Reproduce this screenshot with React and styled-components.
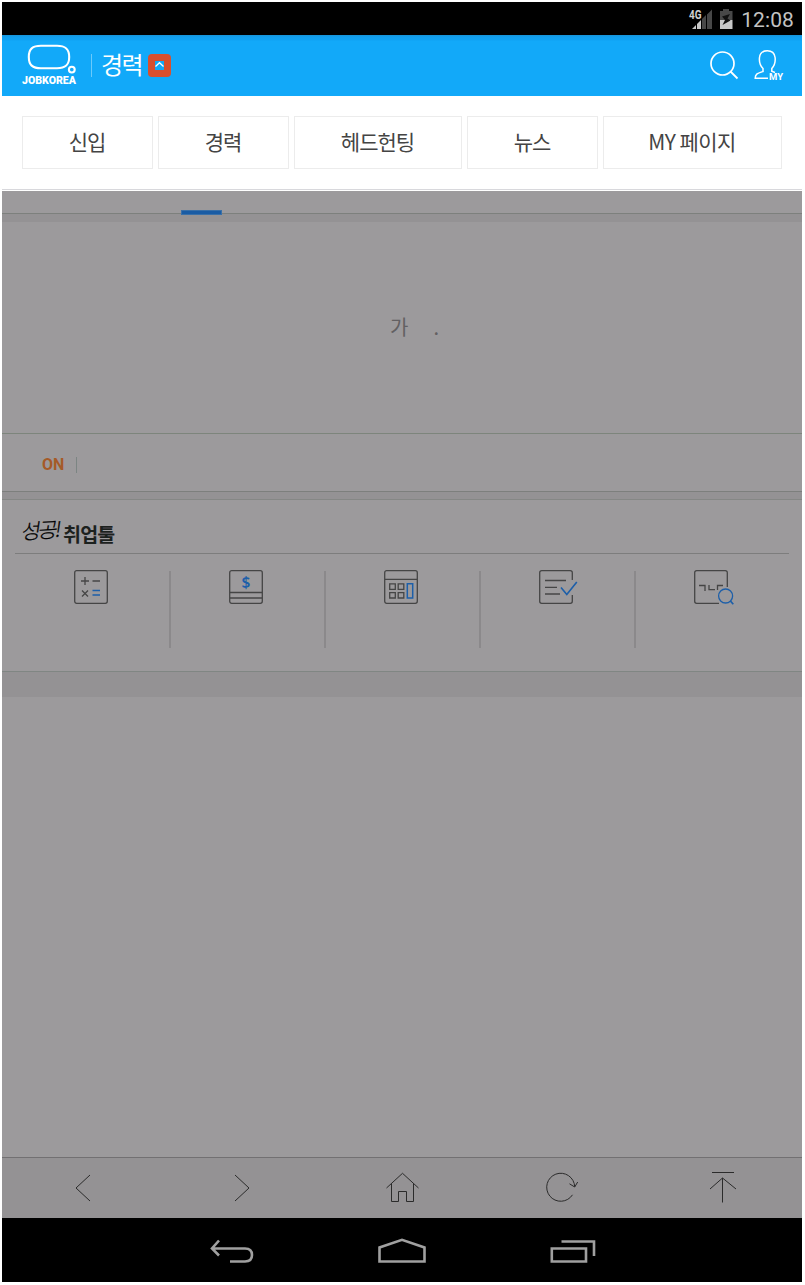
import React from "react";
import styled, { createGlobalStyle } from "styled-components";

const Global = createGlobalStyle`
  *{box-sizing:border-box}
  body{margin:0;background:#fff;font-family:"Noto Sans CJK KR","Roboto",sans-serif}
  svg{display:block;overflow:visible;flex:none}
`;

const Device = styled.div`
  width: 800px;
  height: 1280px;
  margin: 2px;
  display: flex;
  flex-direction: column;
  background: #9c9a9c;
  overflow: hidden;
`;
const StatusBar = styled.div`
  height: 33px;
  flex: none;
  background: #000;
  display: flex;
  justify-content: flex-end;
  align-items: center;
  padding: 1px 8px 0 0;
`;
const Clock = styled.span`
  font: 400 21px/30px Roboto, sans-serif;
  color: #c3c3c3;
  letter-spacing: 0.1px;
  margin-left: 7px;
  padding-top: 1px;
`;
const Header = styled.header`
  height: 61px;
  flex: none;
  background: linear-gradient(#1793d8 0, #129fee 2px, #10a2f3 5px, #12a9f9 6px);
  display: flex;
  align-items: center;
  padding: 0 18px 0 20px;
`;
const LogoLink = styled.a`
  margin: -4px 13px 0 0;
`;
const Divider = styled.i`
  width: 1px;
  height: ${(p) => p.$h}px;
  background: ${(p) => p.$color};
`;
const Section = styled.span`
  color: #fff;
  font-size: 24px;
  font-weight: 400;
  line-height: 30px;
  letter-spacing: -1.5px;
  margin: -4px 5px 0 9px;
  width: 42px;
  white-space: nowrap;
`;
const HeaderIcons = styled.div`
  margin: -2px 0 0 auto;
  display: flex;
  gap: 16px;
`;
const Menu = styled.nav`
  height: 95px;
  flex: none;
  background: #fff;
  padding: 20px;
  display: grid;
  grid-template-columns: 131px 131px 168px 131px 179px;
  grid-template-rows: 53px;
  gap: 5px;
  box-shadow: inset 0 -1px #fff, inset 0 -2px #d8d8dc;
`;
const MenuItem = styled.button`
  border: 1px solid #ececec;
  background: #fff;
  padding: 0 1px 4px 0;
  color: #444;
  font: 400 21px/30px "Noto Sans CJK KR", sans-serif;
  letter-spacing: ${(p) => p.$spacing || "-1px"};
`;
const TabStrip = styled.div`
  height: 22px;
  flex: none;
  display: flex;
  align-items: flex-end;
  padding-left: 179px;
`;
const TabMark = styled.i`
  width: 41px;
  height: 5px;
  margin-bottom: -2px;
  background: #1a5ca4;
  border: 1px solid #3a70a8;
  z-index: 1;
`;
const Band = styled.div`
  height: ${(p) => p.$h}px;
  flex: none;
  background: #949294;
  border-top: ${(p) => p.$top || "1px solid #808683"};
  border-bottom: ${(p) => p.$bottom || "0"};
`;
const Notice = styled.div`
  height: 211px;
  flex: none;
  display: flex;
  justify-content: center;
  padding-top: 90px;
  padding-left: 25px;
  color: #626062;
  font-size: 20px;
  line-height: 30px;
  font-weight: 400;
  gap: 25px;
`;
const OnRow = styled.div`
  height: 58px;
  flex: none;
  border-top: 1px solid #7d857c;
  display: flex;
  align-items: center;
  gap: 12px;
  padding: 5px 0 0 40px;
  color: #a55a28;
  font: 700 16px/20px Roboto, sans-serif;
`;
const Tools = styled.section`
  height: 171px;
  flex: none;
  padding: 0 13px;
`;
const ToolsTitle = styled.h2`
  height: 54px;
  margin: 0;
  padding: 13px 0 0 7px;
  border-bottom: 1px solid #7d7d7d;
  display: flex;
  align-items: center;
  color: #1c211e;
  font-size: 19.5px;
  font-weight: 700;
  letter-spacing: -0.8px;
  white-space: nowrap;
`;
const Script = styled.span`
  font-size: 21px;
  font-weight: 300;
  color: #000;
  width: 41px;
  letter-spacing: -2.6px;
  -webkit-text-stroke: 0.25px #000;
  transform: translateY(-4px) skew(-8deg, -4deg);
`;
const ToolGrid = styled.div`
  display: grid;
  grid-template-columns: repeat(5, 155px);
  padding-top: 17px;
  margin-left: 1px;
`;
const Tool = styled.div`
  height: 77px;
  display: flex;
  justify-content: center;
  border-right: ${(p) => (p.$last ? "0" : "2px solid #8b898b")};

  svg {
    margin: -1px 0 0 ${(p) => (p.$last ? "-5px" : "-3px")};
  }
`;
const Blank = styled.div`
  flex: 1;
`;
const Toolbar = styled.div`
  height: 61px;
  flex: none;
  background: #949294;
  border-top: 1px solid #727072;
  display: grid;
  grid-template-columns: repeat(5, 1fr);
  place-items: center;
`;
const SystemBar = styled.div`
  height: 64px;
  flex: none;
  background: #000;
  display: flex;
  justify-content: center;
  gap: 124px;
  padding-top: 19px;
`;

const ink = { fill: "none", stroke: "#454545", strokeWidth: 1.3 };
const blue = { fill: "none", stroke: "#1d5fa9", strokeWidth: 1.3 };
const thin = { fill: "none", stroke: "#2b2b2b", strokeWidth: 1 };
const sys = { fill: "none", stroke: "#a0a0a0", strokeWidth: 2.6 };

const Logo = () => (
  <svg width="56" height="42" viewBox="0 0 56 42">
    <path d="M19 2.8H35C43.5 2.8 47.2 6 47.2 14S43.5 25.2 35 25.2H19C10.5 25.2 6.8 22 6.8 14S10.5 2.8 19 2.8Z" fill="none" stroke="#fff" strokeWidth="2.1" />
    <circle cx="49.8" cy="26.6" r="2.9" fill="none" stroke="#fff" strokeWidth="2.1" />
    <text x="0" y="40.8" textLength="54" lengthAdjust="spacingAndGlyphs" fontFamily="Roboto" fontWeight="900" fontSize="10.5" fill="#fff">JOBKOREA</text>
  </svg>
);

const Signal = () => (
  <svg width="45" height="24" viewBox="0 0 45 24">
    <text x="0" y="11.5" textLength="12.5" lengthAdjust="spacingAndGlyphs" fontFamily="Roboto" fontWeight="700" fontSize="12.5" fill="#d0d0d0">4G</text>
    <path d="M3 22 7 18V22ZM8 17 12 13V22H8Z" fill="#c8c8c8" />
    <path d="M13 12 17 8V22H13ZM18 7.5 23 2.5V22H18Z" fill="#474747" />
    <path d="M31 4H34V2H40V4H43.5V13H31Z" fill="#484848" />
    <path d="M31 13H43.5V22H31Z" fill="#c8c8c8" />
    <path d="M41 7 33 9.5 36 13 33.5 18 41.5 13.5 38.5 11.5Z" fill="#111" />
  </svg>
);

const toolIcons = [
  <svg width="34" height="34">
    <rect x=".7" y=".7" width="32.6" height="32.6" rx="2" {...ink} />
    <path d="M7 11H15M11 7V15M18.5 11H26M8 20.5 14 26.5M14 20.5 8 26.5" {...ink} />
    <path d="M18.5 20.5H26M18.5 25H26" {...blue} />
  </svg>,
  <svg width="34" height="34">
    <rect x=".7" y=".7" width="32.6" height="32.6" rx="2" {...ink} />
    <path d="M1 22.5H33M1 28H33" {...ink} />
    <text x="17" y="17.5" textAnchor="middle" fontFamily="Noto Sans" fontWeight="600" fontSize="15.5" fill="#1d5fa9">$</text>
  </svg>,
  <svg width="34" height="34">
    <rect x=".7" y=".7" width="32.6" height="32.6" rx="2" {...ink} />
    <path d="M1 9.3H33M5.7 13.8H11.3V19.3H5.7ZM14.2 13.8H19.8V19.3H14.2ZM5.7 22.6H11.3V28H5.7ZM14.2 22.6H19.8V28H14.2Z" {...ink} />
    <path d="M23.3 13.8H28.7V28H23.3Z" {...blue} strokeWidth="1.5" />
  </svg>,
  <svg width="34" height="34">
    <path d="M33.3 10V2.7Q33.3.7 31.3.7H2.7Q.7.7.7 2.7V31.3Q.7 33.3 2.7 33.3H31.3Q33.3 33.3 33.3 31.3V25M6 10.5H27M6 17.3H18M6 24H21" {...ink} />
    <path d="M22 17.5 27.8 24.5 37.8 12" {...blue} strokeWidth="1.6" />
  </svg>,
  <svg width="34" height="34">
    <path d="M33.3 17V2.7Q33.3.7 31.3.7H2.7Q.7.7.7 2.7V31.3Q.7 33.3 2.7 33.3H25" {...ink} />
    <path d="M5 15.5H11V21M15 15V19.7H21M29 15.5H23.5V20" {...ink} />
    <circle cx="31.6" cy="26" r="7" {...blue} />
    <path d="M36.4 31 39.3 34.3" {...blue} strokeWidth="1.7" />
  </svg>,
];

const barIcons = [
  <svg width="32" height="32"><path d="M24 3 10 16 24 29" {...thin} /></svg>,
  <svg width="32" height="32"><path d="M9 3 23 16 9 29" {...thin} /></svg>,
  <svg width="32" height="32">
    <path d="M.5 16 16.5 1.3 32.5 16M5.5 11.5V29.5H12.5V19.5H20.5V29.5H27.5V11.5" {...thin} />
  </svg>,
  <svg width="32" height="32">
    <path d="M26.5 22.8A14 14 0 1 1 28.7 14.8M23.5 11.8 28.7 15 31.7 10" {...thin} />
  </svg>,
  <svg width="32" height="32"><path d="M6 .5H28M16.5 6V30.5M4 17 16.5 6 30 17" {...thin} /></svg>,
];

const menu = [["신입"], ["경력"], ["헤드헌팅"], ["뉴스"], ["MY 페이지", "-0.6px"]];

export default function App() {
  return (
    <>
      <Global />
      <Device>
        <StatusBar>
          <Signal />
          <Clock>12:08</Clock>
        </StatusBar>
        <Header>
          <LogoLink><Logo /></LogoLink>
          <Divider $h={23} $color="#6bcafb" />
          <Section>경력</Section>
          <svg width="23" height="23">
            <rect width="23" height="23" rx="4" fill="#d94f2e" />
            <rect x="7" y="7" width="9" height="9" fill="#12a9f9" />
            <path d="M7.5 12.5 11.5 8.7 15.5 12.5" fill="none" stroke="#fff" strokeWidth="1.3" />
          </svg>
          <HeaderIcons>
            <svg width="28" height="30" viewBox="0 0 28 30">
              <circle cx="12.5" cy="13.5" r="11.5" fill="none" stroke="#fff" strokeWidth="1.7" />
              <path d="M20.5 21.5 27.5 28.5" stroke="#fff" strokeWidth="1.8" />
            </svg>
            <svg width="30" height="30" viewBox="0 0 30 30">
              <path d="M14 28.3H1.2C1.2 24 3 23.5 9 21.5V18.5C5.5 15 5 12 5.5 7.5C6 3 9 .8 13.3.8S20.5 3 21.1 7.5C21.6 12 21 15 17.8 18.5V21.3L21 22.5" fill="none" stroke="#fff" strokeWidth="1.5" />
              <text x="15" y="30" textLength="14" lengthAdjust="spacingAndGlyphs" fontFamily="Roboto" fontWeight="700" fontSize="8.5" fill="#fff">MY</text>
            </svg>
          </HeaderIcons>
        </Header>
        <Menu>
          {menu.map(([label, spacing]) => (
            <MenuItem key={label} $spacing={spacing}>{label}</MenuItem>
          ))}
        </Menu>
        <TabStrip><TabMark /></TabStrip>
        <Band $h={9} $top="1px solid #7d807d" />
        <Notice><span>가</span><span>.</span></Notice>
        <OnRow>
          ON
          <Divider $h={16} $color="#7c8583" />
        </OnRow>
        <Band $h={9} $top="1px solid #7d7f7d" $bottom="1px solid #858785" />
        <Tools>
          <ToolsTitle><Script>성공!</Script>취업툴</ToolsTitle>
          <ToolGrid>
            {toolIcons.map((icon, i) => (
              <Tool key={i} $last={i === 4}>{icon}</Tool>
            ))}
          </ToolGrid>
        </Tools>
        <Band $h={26} />
        <Blank />
        <Toolbar>
          {barIcons.map((icon, i) => <span key={i}>{icon}</span>)}
        </Toolbar>
        <SystemBar>
          <svg width="45" height="28">
            <path d="M10 3.5 3 11.5 10 18.5M3 11.5H36Q43 11.5 43 18T36 24.5H21" {...sys} />
          </svg>
          <svg width="48" height="28"><path d="M1.5 24.5V10.5L24 2.8 46.5 10.5V24.5Z" {...sys} /></svg>
          <svg width="45" height="28"><path d="M1.8 11.5H36V24.5H1.8ZM11.5 4.5H44V19" {...sys} /></svg>
        </SystemBar>
      </Device>
    </>
  );
}
